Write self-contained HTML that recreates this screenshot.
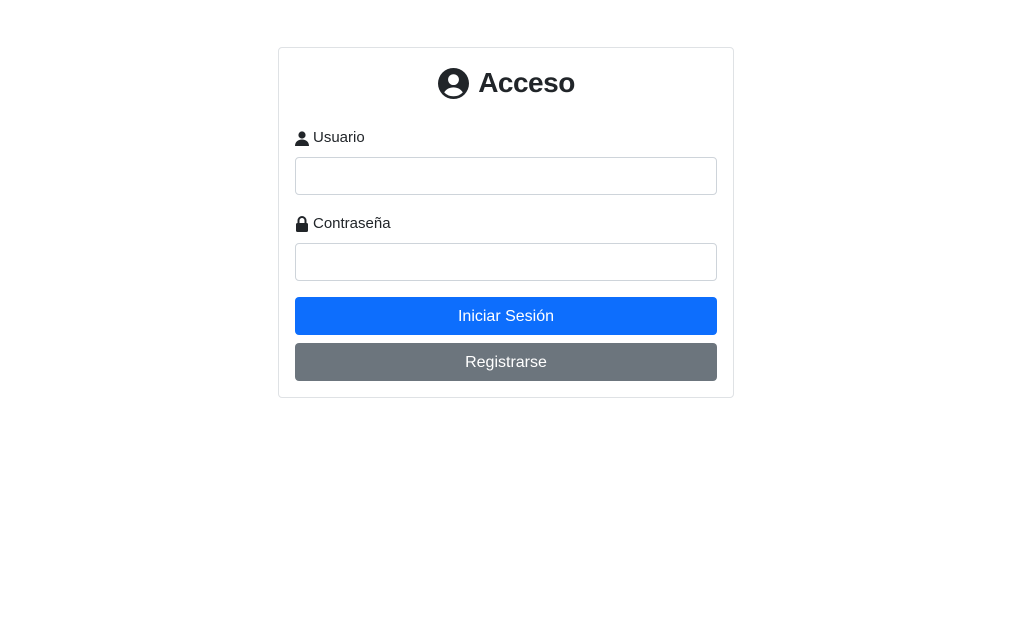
<!DOCTYPE html>
<html><head><meta charset="utf-8"><style>
body{margin:0;width:1017px;height:629px;background:#fff;font-family:"Liberation Sans",sans-serif;color:#212529;position:relative;overflow:hidden}
.card{position:absolute;left:278px;top:47px;width:454px;height:349px;border:1px solid #dfe2e5;border-radius:4px}
.abs{position:absolute}
.title{left:0;width:100%;top:64px;padding-right:4px;box-sizing:border-box;text-align:center;font-size:28px;font-weight:600;line-height:38px;display:flex;justify-content:center;align-items:center;gap:9px}
.label{left:295px;font-size:15px;line-height:20px;display:flex;align-items:center;gap:4px}
.input{left:295px;width:420px;height:36px;border:1px solid #ced4da;border-radius:4px}
.btn{left:295px;width:422px;height:38px;border-radius:4px;color:#fff;font-size:16px;line-height:40px;text-align:center}
</style></head><body>
<div class="card"></div>
<div class="abs title"><svg width="31" height="31" viewBox="0 0 16 16"><circle cx="8" cy="8" r="8" fill="#212529"/><circle cx="8" cy="6" r="2.8" fill="#fff"/><path d="M3.2 12.6C4.2 10.9 6 10 8 10s3.8.9 4.8 2.6A6.4 6.4 0 0 1 8 14.6a6.4 6.4 0 0 1-4.8-2Z" fill="#fff"/></svg><span style="letter-spacing:-0.5px">Acceso</span></div>
<div class="abs label" style="top:128px"><svg width="14" height="15" viewBox="0 0 14 15"><circle cx="7" cy="4" r="3.6" fill="#212529"/><path d="M0 15c0-4 3-6.5 7-6.5s7 2.5 7 6.5Z" fill="#212529"/></svg>Usuario</div>
<div class="abs input" style="top:157px"></div>
<div class="abs label" style="top:214px"><svg width="14" height="16" viewBox="0 0 14 16"><path d="M3.5 7V4.5a3.5 3.5 0 0 1 7 0V7" stroke="#212529" stroke-width="2" fill="none"/><rect x="1" y="7" width="12" height="9" rx="1.5" fill="#212529"/></svg>Contraseña</div>
<div class="abs input" style="top:243px"></div>
<div class="abs btn" style="top:297px;background:#0d6efd">Iniciar Sesión</div>
<div class="abs btn" style="top:343px;background:#6c757d">Registrarse</div>
</body></html>
